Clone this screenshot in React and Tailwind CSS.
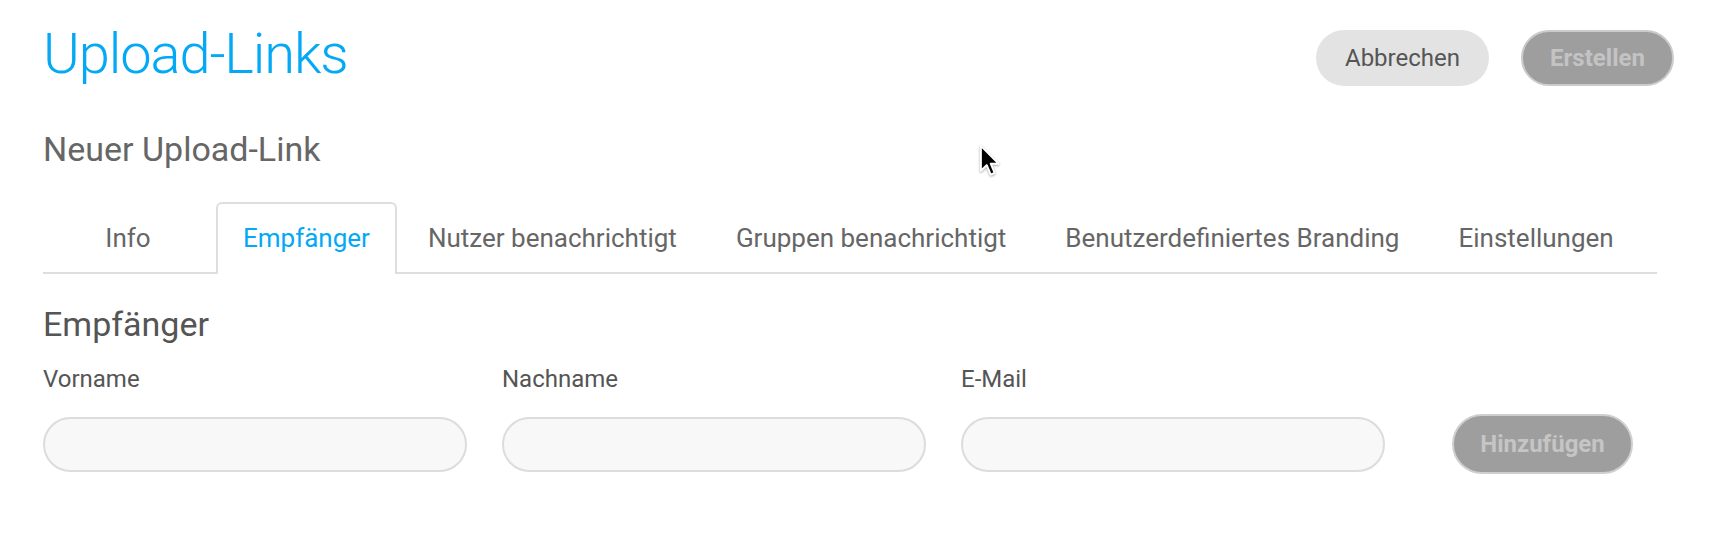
import { useState } from 'react'

const TABS = ['Info', 'Empfänger', 'Nutzer benachrichtigt', 'Gruppen benachrichtigt', 'Benutzerdefiniertes Branding', 'Einstellungen']
const FIELDS = ['Vorname', 'Nachname', 'E-Mail']

function Cursor() {
  return (
    <svg className="absolute left-[979px] top-[144px] drop-shadow-[0_1px_1px_rgba(0,0,0,0.35)]" width="22" height="34" viewBox="0 0 18 28">
      <path d="M1.5 1.5 L1.5 22 L6.3 17.4 L9.6 25.2 L12.8 23.8 L9.6 16.2 L16 16.2 Z" fill="#000" stroke="#fff" strokeWidth="1.6" strokeLinejoin="round" />
    </svg>
  )
}

export default function App() {
  const [active, setActive] = useState(1)
  const [form, setForm] = useState({ Vorname: '', Nachname: '', 'E-Mail': '' })

  return (
    <div className="relative min-h-[560px] bg-white pl-[43px] font-['Roboto','Liberation_Sans',sans-serif] text-[#555]">
      <header className="flex items-start justify-between pt-[26px] pr-[46px]">
        <h1 className="text-[56px] font-light leading-none tracking-[-1.1px] text-[#03a9f4]">Upload-Links</h1>
        <div className="mt-[4px] flex gap-[32px]">
          <button className="h-[56px] w-[173px] rounded-full bg-[#e3e3e3] text-[24px] text-[#555]">Abbrechen</button>
          <button disabled className="h-[56px] w-[153px] rounded-full border-2 border-[#cbcbcb] bg-[#9e9e9e] text-[24px] font-bold text-[#c3c3c3]">Erstellen</button>
        </div>
      </header>

      <div className="pr-[63px]">
        <h2 className="mt-[46px] text-[34px] leading-none text-[#666]">Neuer Upload-Link</h2>

        <nav className="mt-[36px] flex h-[72px] border-b-2 border-[#dedede]">
          {TABS.map((t, i) => (
            <button
              key={t}
              onClick={() => setActive(i)}
              className={
                i === active
                  ? 'relative z-10 mr-[3px] h-[72px] min-w-[170px] rounded-t-[6px] border-2 border-b-0 border-[#dedede] bg-white px-[25px] pt-[21px] text-[26px] leading-none text-[#03a9f4] flex justify-center items-start'
                  : 'mr-[3px] h-[70px] min-w-[170px] px-[28px] pt-[23px] text-[26px] leading-none text-[#666] flex justify-center items-start'
              }
            >
              {t}
            </button>
          ))}
        </nav>

        <h3 className="mt-[33px] text-[34px] leading-none text-[#555]">Empfänger</h3>

        <div className="mt-[26px] flex items-start">
          {FIELDS.map((f, i) => (
            <div key={f} className={`w-[424px] ${i > 0 ? 'ml-[35px]' : ''}`}>
              <label className="block text-[24px] leading-none text-[#555]">{f}</label>
              <input
                value={form[f]}
                onChange={e => setForm(s => ({ ...s, [f]: e.target.value }))}
                className="mt-[26px] h-[55px] w-full rounded-full border-2 border-[#dcdcdc] bg-[#f8f8f8] px-5 text-[22px] outline-none"
              />
            </div>
          ))}
          <button disabled className="ml-[67px] mt-[47px] h-[60px] w-[181px] rounded-full border-2 border-[#cfcfcf] bg-[#9e9e9e] text-[24px] font-bold text-[#c5c5c5]">
            Hinzufügen
          </button>
        </div>
      </div>

      <Cursor />
    </div>
  )
}
